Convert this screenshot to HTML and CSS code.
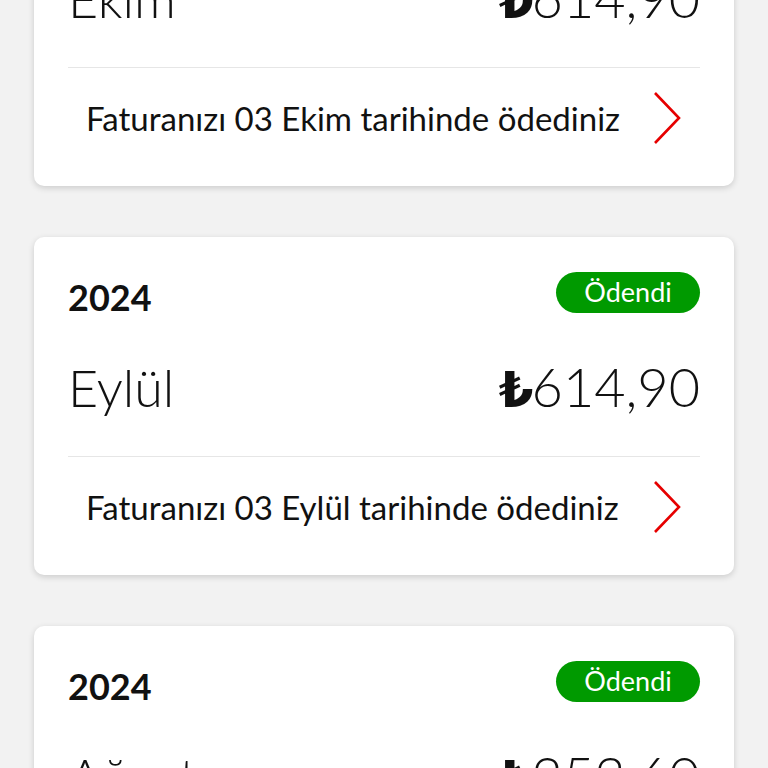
FILE: index.html
```html
<!DOCTYPE html>
<html lang="tr">
<head>
<meta charset="utf-8">
<title>Faturalar</title>
<link rel="stylesheet" href="styles.css">
</head>
<body>
<main class="list">
  <section class="card">
    <div class="head"><span class="year">2024</span><span class="badge">Ödendi</span></div>
    <div class="main"><span class="month">Ekim</span><span class="amount"><span class="cur">₺</span>614,90</span></div>
    <div class="foot"><span class="note">Faturanızı 03 Ekim tarihinde ödediniz</span>
      <svg class="chev" viewBox="0 0 30 54" width="30" height="54"><path d="M3 2 L27 27 L3 52" fill="none" stroke="#e60000" stroke-width="2.6"/></svg></div>
  </section>
  <section class="card">
    <div class="head"><span class="year">2024</span><span class="badge">Ödendi</span></div>
    <div class="main"><span class="month">Eylül</span><span class="amount"><span class="cur">₺</span>614,90</span></div>
    <div class="foot"><span class="note">Faturanızı 03 Eylül tarihinde ödediniz</span>
      <svg class="chev" viewBox="0 0 30 54" width="30" height="54"><path d="M3 2 L27 27 L3 52" fill="none" stroke="#e60000" stroke-width="2.6"/></svg></div>
  </section>
  <section class="card">
    <div class="head"><span class="year">2024</span><span class="badge">Ödendi</span></div>
    <div class="main"><span class="month">Ağustos</span><span class="amount"><span class="cur">₺</span>253,60</span></div>
    <div class="foot"><span class="note">Faturanızı 03 Ağustos tarihinde ödediniz</span>
      <svg class="chev" viewBox="0 0 30 54" width="30" height="54"><path d="M3 2 L27 27 L3 52" fill="none" stroke="#e60000" stroke-width="2.6"/></svg></div>
  </section>
</main>
</body>
</html>
```

FILE: styles.css
```css
html, body {
  margin: 0;
  padding: 0;
  background: #f2f2f2;
  height: 768px;
  overflow: hidden;
}
body {
  font-family: "Lato", "Noto Sans", sans-serif;
  color: #111;
}
.list {
  display: flex;
  flex-direction: column;
  gap: 51px;
  padding: 0 34px;
  margin-top: -152px;
}
.card {
  background: #fff;
  border-radius: 10px;
  box-shadow: 0 2px 6px rgba(0,0,0,0.16);
  padding: 35px 34px 0;
  height: 338px;
  box-sizing: border-box;
  display: flex;
  flex-direction: column;
}
.head {
  display: flex;
  justify-content: space-between;
  align-items: center;
  height: 41px;
}
.year {
  font-weight: 700;
  font-size: 36px;
  padding-top: 8px;
}
.badge {
  background: #009a00;
  color: #fff;
  border-radius: 21px;
  height: 41px;
  width: 144px;
  display: flex;
  align-items: center;
  justify-content: center;
  font-size: 27px;
  line-height: 1;
  padding-bottom: 3px;
  box-sizing: border-box;
}
.main {
  display: flex;
  justify-content: space-between;
  align-items: center;
  height: 144px;
  padding-top: 4px;
  box-sizing: border-box;
  border-bottom: 1px solid #e6e6e6;
}
.month {
  font-weight: 300;
  font-size: 52px;
}
.amount {
  font-weight: 300;
  font-size: 54px;
}
.cur {
  font-family: "DejaVu Sans", sans-serif;
  font-weight: 700;
  font-size: 50px;
  letter-spacing: -2px;
}
.foot {
  display: flex;
  align-items: center;
  justify-content: space-between;
  height: 116px;
  padding: 0 18px 16px 18px;
  box-sizing: border-box;
}
.note {
  font-size: 33px;
}
.chev {
  display: block;
}
```
